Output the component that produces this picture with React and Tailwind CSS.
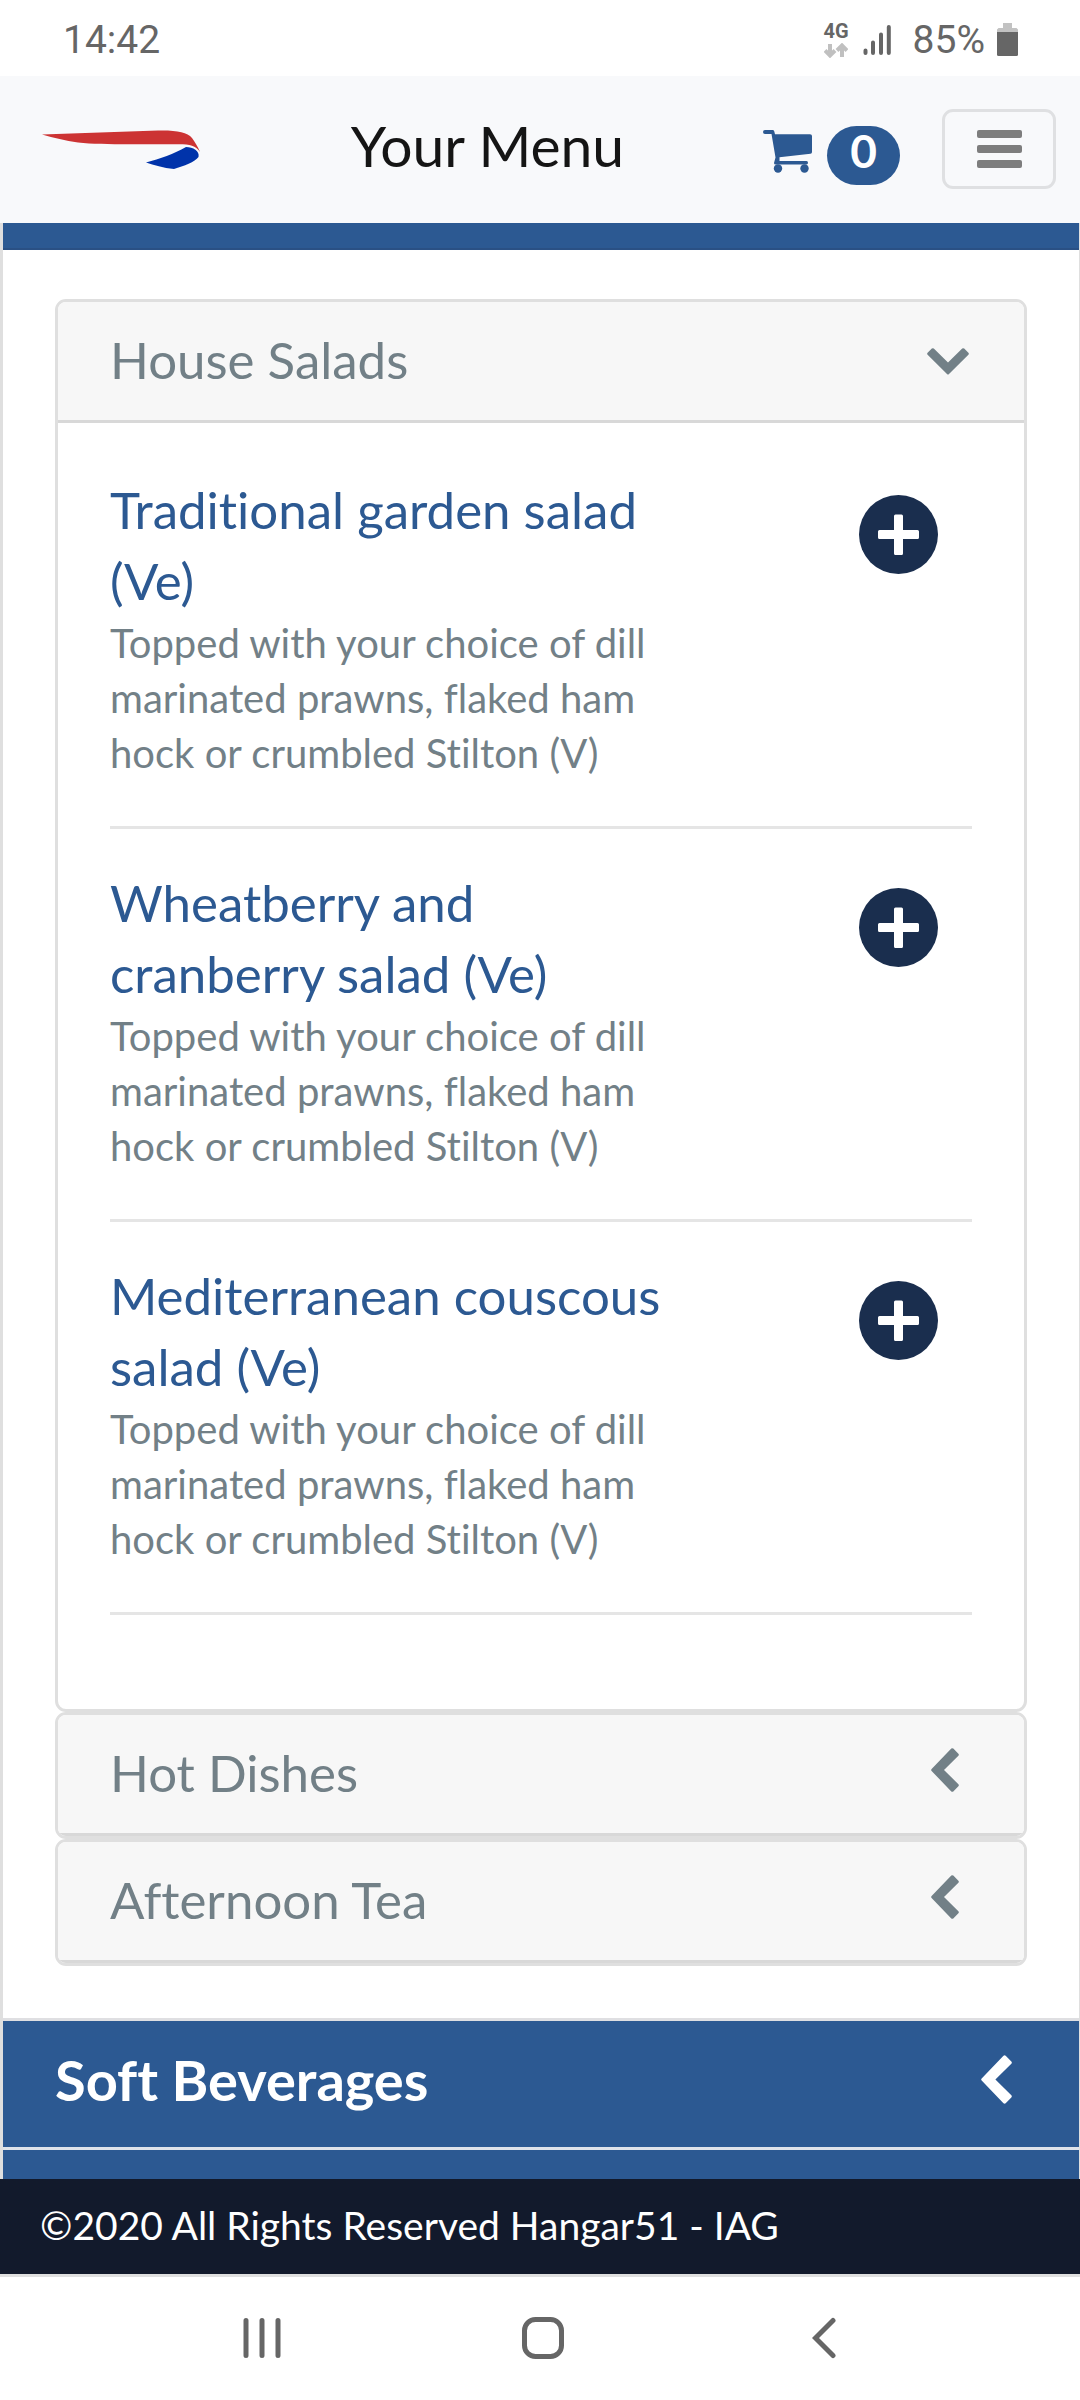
import { useState } from 'react'

const salads = [
  { name: 'Traditional garden salad (Ve)' },
  { name: 'Wheatberry and cranberry salad (Ve)' },
  { name: 'Mediterranean couscous salad (Ve)' },
]

const saladNote = 'Topped with your choice of dill marinated prawns, flaked ham hock or crumbled Stilton (V)'

function ChevronDown({ className }) {
  return (
    <svg viewBox="0 0 42 27" fill="currentColor" className={className} aria-hidden="true">
      <path d="M4.8.6Q5.8-.3 6.8.6L21 14.4 35.2.6Q36.2-.3 37.2.6L41.4 4.8Q42.3 5.8 41.4 6.8L22 26Q21 27 20 26L.6 6.8Q-.3 5.8.6 4.8Z" />
    </svg>
  )
}

function ChevronLeft({ className }) {
  return (
    <svg viewBox="0 0 28 44" fill="currentColor" className={className} aria-hidden="true">
      <path d="M20.3.6Q21.3-.3 22.3.6L27.4 5.8Q28.3 6.8 27.4 7.8L13 22 27.4 36.2Q28.3 37.2 27.4 38.2L22.3 43.4Q21.3 44.3 20.3 43.4L.6 23Q-.3 22 .6 21Z" />
    </svg>
  )
}

function StatusBar() {
  return (
    <div className="flex h-[76px] items-center justify-between pt-1 pr-[62px] pl-[63px] font-['Roboto',sans-serif] text-[39px] text-[#666666]">
      <span>14:42</span>
      <div className="flex items-center">
        <div className="flex flex-col items-center gap-1 text-[20px] leading-[16px] font-bold">
          <span>4G</span>
          <svg viewBox="0 0 24 15" className="h-[15px] w-6" fill="none" stroke="#c0c0c0" strokeWidth="4" aria-hidden="true">
            <path d="M6 1V13M1 7.5L6 12.5L11 7.5M18 14V2M13 7.5L18 2.5L23 7.5" />
          </svg>
        </div>
        <svg viewBox="0 0 28 32" className="ml-[14px] h-8 w-7" stroke="currentColor" strokeWidth="4" strokeLinecap="round" aria-hidden="true">
          <path d="M2.5 26.500V29M10 18.500V29M18 10.500V29M25.800 3V29" />
        </svg>
        <span className="ml-[22px]">85%</span>
        <svg viewBox="0 0 21 34" className="ml-3 h-[34px] w-[21px]" aria-hidden="true">
          <path d="M6 0H15V5H19.500L21 6.500V11H0V6.500L1.500 5H6Z" fill="#c2c2c2" />
          <path d="M0 9H21V31.500Q21 33 19.500 33H1.500Q0 33 0 31.500Z" fill="#666666" />
        </svg>
      </div>
    </div>
  )
}

function Header() {
  return (
    <header className="flex h-[147px] items-center bg-[#f8f9fb] pr-6 pb-[1px] pl-[42px]">
      <a href="#home" aria-label="Home">
        <svg viewBox="0 0 158 39" className="h-[39px] w-[158px]" aria-hidden="true">
          <path d="M0 4.500L116 .6C134 .2 145 2 150 8C153 12 156 17 158 22C153 15 147 14 133 14.300H88C66 14.300 50 14 36 12.500C23 10.500 12 8 0 4.500Z" fill="#cc3333" />
          <path d="M104 32.500C118 28.500 132 24 144 17C151 17 158 21 156.500 27C153 32 142 36 132 39C121 38 112 35 104 32.500Z" fill="#0033aa" />
        </svg>
      </a>
      <h1 className="flex-1 pb-2 pl-3 text-center text-[57px] leading-[68px] text-[#151515]">Your Menu</h1>
      <button type="button" aria-label="Basket" className="flex items-center gap-[15px] pt-1 text-[#2c5992]">
        <svg viewBox="0 0 49 43" className="h-[43px] w-[49px]" fill="currentColor" aria-hidden="true">
          <path d="M2 0H10Q11 0 11.300 1.500L12 4.300H47Q49 4.300 49 6V22Q49 23.500 47.500 23.700L16.500 27.300V31H43.500Q45 31 45 32.700T43.500 34.500H12.500Q11 34.500 11 33L12.500 27.500 8.500 4H2Q0 4 0 2T2 0Z" />
          <circle cx="15" cy="38.500" r="4.200" />
          <circle cx="41.500" cy="38.500" r="4.200" />
        </svg>
        <span className="mt-2 flex h-[59px] w-[73px] items-center justify-center rounded-[30px] bg-[#2c5992] pb-2 text-[46px] leading-[50px] font-bold text-white">0</span>
      </button>
      <button
        type="button"
        aria-label="Toggle navigation"
        className="ml-[42px] flex h-20 w-[114px] flex-col items-center justify-center gap-[7px] rounded-[11px] border-[3px] border-[#dfe0e2] text-[#7d7d7d]"
      >
        <span className="h-2 w-[45px] rounded-[2px] bg-current" />
        <span className="h-2 w-[45px] rounded-[2px] bg-current" />
        <span className="h-2 w-[45px] rounded-[2px] bg-current" />
      </button>
    </header>
  )
}

function MenuItem({ name, note }) {
  return (
    <li className="flex items-start justify-between border-b-[3px] border-[#e5e5e5] pt-[38px] pr-[34px] pb-[45px]">
      <div className="w-[565px]">
        <h3 className="text-[51px] leading-[71px] text-[#2c5992]">{name}</h3>
        <p className="text-[40px] leading-[55px] text-[#728087]">{note}</p>
      </div>
      <button type="button" aria-label={`Add ${name}`} className="mt-[21px] shrink-0">
        <svg viewBox="0 0 79 79" className="size-[79px]" aria-hidden="true">
          <circle cx="39.500" cy="39.500" r="39.500" fill="#1a2e4e" />
          <path d="M36.500 19.500H42.500Q44 19.500 44 21V35H58.500Q60 35 60 36.500V42.500Q60 44 58.500 44H44V58.500Q44 60 42.500 60H36.500Q35 60 35 58.500V44H20.500Q19 44 19 42.500V36.500Q19 35 20.500 35H35V21Q35 19.500 36.500 19.500Z" fill="white" />
        </svg>
      </button>
    </li>
  )
}

function MenuCard({ title, defaultOpen = false, children }) {
  const [open, setOpen] = useState(defaultOpen)
  return (
    <section className="overflow-hidden rounded-[11px] border-[3px] border-[#dfdfdf] bg-white">
      <h2>
        <button
          type="button"
          aria-expanded={open}
          onClick={() => setOpen(!open)}
          className="flex h-[121px] w-full items-center justify-between border-b-[3px] border-[#d8d8d8] bg-[#f7f7f7] pr-[55px] pb-1 pl-[52px] text-left text-[51px] leading-[71px] text-[#728087]"
        >
          {title}
          {open ? <ChevronDown className="mt-1 h-[27px] w-[42px]" /> : <ChevronLeft className="mr-[10px] mb-1 h-11 w-7" />}
        </button>
      </h2>
      {open && children}
    </section>
  )
}

function SystemNav() {
  return (
    <nav className="grid h-[126px] grid-cols-3 items-center justify-items-center border-t-[3px] border-[#dfdfdf] bg-white pr-[115px] pb-[1px] pl-[121px] text-[#666666]">
      <button type="button" aria-label="Recent apps">
        <svg viewBox="0 0 40 42" className="h-[42px] w-10" stroke="currentColor" strokeWidth="5" strokeLinecap="round" aria-hidden="true">
          <path d="M4 3.500V38.500M20 3.500V38.500M36 3.500V38.500" />
        </svg>
      </button>
      <button type="button" aria-label="Home screen">
        <svg viewBox="0 0 42 42" className="size-[42px]" fill="none" stroke="currentColor" strokeWidth="5" aria-hidden="true">
          <rect x="2.500" y="2.500" width="37" height="37" rx="11" />
        </svg>
      </button>
      <button type="button" aria-label="Back">
        <svg viewBox="0 0 24 42" className="h-[42px] w-6" fill="none" stroke="currentColor" strokeWidth="5" strokeLinecap="round" aria-hidden="true">
          <path d="M21 3.500L3.500 21L21 38.500" />
        </svg>
      </button>
    </nav>
  )
}

export default function App() {
  return (
    <div className="min-h-screen w-full bg-white font-['Lato',sans-serif] [font-variant-ligatures:none]">
      <StatusBar />
      <Header />
      <main className="border-r border-l-[3px] border-[#dfdfdf]">
        <div className="h-[27px] border-b-2 border-[#2a5084] bg-[#2c5992]" />
        <div className="pt-[49px] pr-[52px] pb-[52px] pl-[52px]">
          <MenuCard title="House Salads" defaultOpen>
            <ul className="px-[52px] pt-[13px] pb-[94px]">
              {salads.map((item) => (
                <MenuItem key={item.name} name={item.name} note={saladNote} />
              ))}
            </ul>
          </MenuCard>
          <MenuCard title="Hot Dishes" />
          <MenuCard title="Afternoon Tea" />
        </div>
        <h2 className="border-t-[3px] border-[#dfdfe2]">
          <button
            type="button"
            aria-expanded="false"
            className="flex h-[126px] w-full items-center justify-between bg-[#2c5992] pr-[67px] pb-[9px] pl-[52px] text-left text-[56px] leading-[72px] font-bold text-white"
          >
            Soft Beverages
            <ChevronLeft className="h-[49px] w-[31px]" />
          </button>
        </h2>
        <div className="h-8 border-t-[3px] border-[#dfe3ea] bg-[#2c5992]" />
      </main>
      <footer className="flex h-[95px] items-center bg-[#121a2c] px-10 pb-[3px] text-[39px] leading-[56px] text-white">
        ©2020 All Rights Reserved Hangar51 - IAG
      </footer>
      <SystemNav />
    </div>
  )
}
